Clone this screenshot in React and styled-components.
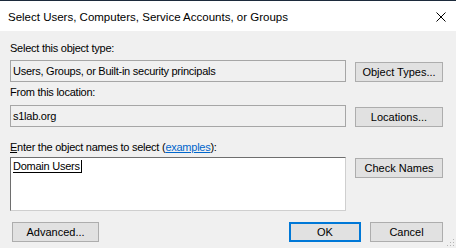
import React from "react";
import styled, { createGlobalStyle } from "styled-components";

const GlobalStyle = createGlobalStyle`
  html, body {
    margin: 0;
    padding: 0;
    background: #f0f0f0;
  }
  * {
    box-sizing: border-box;
  }
`;

export default function App() {
  return (
    <>
      <GlobalStyle />
      <Dialog>
        <TitleBar>
          <Title>Select Users, Computers, Service Accounts, or Groups</Title>
          <CloseIcon width="10" height="10" viewBox="0 0 10 10">
            <path d="M0.5 0.5 L9.5 9.5 M9.5 0.5 L0.5 9.5" stroke="#000" strokeWidth="1" />
          </CloseIcon>
        </TitleBar>

        <Body>
          <Label $top={0}>Select this object type:</Label>
          <Row $top={5}>
            <Field>Users, Groups, or Built-in security principals</Field>
            <Button $top={2}>Object Types...</Button>
          </Row>

          <Label $top={4}>From this location:</Label>
          <Row $top={6}>
            <Field>s1lab.org</Field>
            <Button $top={2}>Locations...</Button>
          </Row>

          <Label $top={14}>
            <u>E</u>nter the object names to select (<LinkText>examples</LinkText>):
          </Label>
          <Row $top={3}>
            <NamesBox>
              <Resolved>Domain Users</Resolved>
            </NamesBox>
            <Button $top={1}>Check Names</Button>
          </Row>

          <Footer>
            <Button $width={87}>Advanced...</Button>
            <FooterRight>
              <Button $width={72} $primary>OK</Button>
              <Button $width={73}>Cancel</Button>
            </FooterRight>
          </Footer>

          <Grip width="9" height="9" viewBox="0 0 9 9">
            <rect x="7" y="1" width="1" height="1" fill="#b5b5b5" />
            <rect x="4" y="4" width="1" height="1" fill="#b5b5b5" />
            <rect x="7" y="4" width="1" height="1" fill="#b5b5b5" />
            <rect x="1" y="7" width="1" height="1" fill="#b5b5b5" />
            <rect x="4" y="7" width="1" height="1" fill="#b5b5b5" />
            <rect x="7" y="7" width="1" height="1" fill="#b5b5b5" />
          </Grip>
        </Body>
      </Dialog>
    </>
  );
}

const Dialog = styled.div`
  width: 456px;
  height: 248px;
  display: flex;
  flex-direction: column;
  border-top: 1px solid #1c2a3b;
  font-family: "Liberation Sans", Arial, sans-serif;
  color: #000;
`;

const TitleBar = styled.div`
  height: 30px;
  flex: none;
  background: #fff;
  display: flex;
  align-items: center;
  justify-content: space-between;
  padding: 0 10px 0 8px;
`;

const Title = styled.div`
  font-size: 11.5px;
  line-height: 14px;
  margin-top: 1px;
`;

const CloseIcon = styled.svg`
  display: block;
  margin-top: 1px;
`;

const Body = styled.div`
  position: relative;
  flex: 1;
  background: #f0f0f0;
  padding: 11px 13px 0 10px;
  display: flex;
  flex-direction: column;
  font-size: 11px;
  line-height: 13px;
  letter-spacing: -0.25px;
`;

const Label = styled.div`
  margin-top: ${(p) => p.$top}px;
  height: 13px;
  white-space: nowrap;

  u {
    text-decoration: underline;
  }
`;

const LinkText = styled.span`
  color: #0066cc;
  text-decoration: underline;
`;

const Row = styled.div`
  margin-top: ${(p) => p.$top}px;
  display: grid;
  grid-template-columns: 336px 88px;
  column-gap: 9px;
  align-items: start;
`;

const Field = styled.div`
  height: 22px;
  border: 1px solid #a6a6a6;
  background: #f0f0f0;
  padding: 0 2px;
  display: flex;
  align-items: center;
  white-space: nowrap;
`;

const NamesBox = styled.div`
  height: 54px;
  background: #fff;
  border-style: solid;
  border-width: 1px;
  border-color: #6e6e6e #cfcfcf #cfcfcf #6e6e6e;
  padding: 2px 2px 0 2px;
`;

const Resolved = styled.span`
  display: inline-block;
  line-height: 12px;
  border-bottom: 1px solid #000;
  border-right: 1px solid #000;
  padding-right: 1px;
`;

const Button = styled.div`
  margin-top: ${(p) => p.$top || 0}px;
  width: ${(p) => (p.$width ? `${p.$width}px` : "auto")};
  height: 20px;
  background: #e1e1e1;
  border: ${(p) => (p.$primary ? "2px solid #0078d7" : "1px solid #adadad")};
  display: flex;
  align-items: center;
  justify-content: center;
  white-space: nowrap;
  letter-spacing: 0;
`;

const Footer = styled.div`
  margin-top: 11px;
  padding-left: 2px;
  display: flex;
  justify-content: space-between;
`;

const FooterRight = styled.div`
  display: flex;
  gap: 9px;
`;

const Grip = styled.svg`
  position: absolute;
  right: 1px;
  bottom: 1px;
`;
